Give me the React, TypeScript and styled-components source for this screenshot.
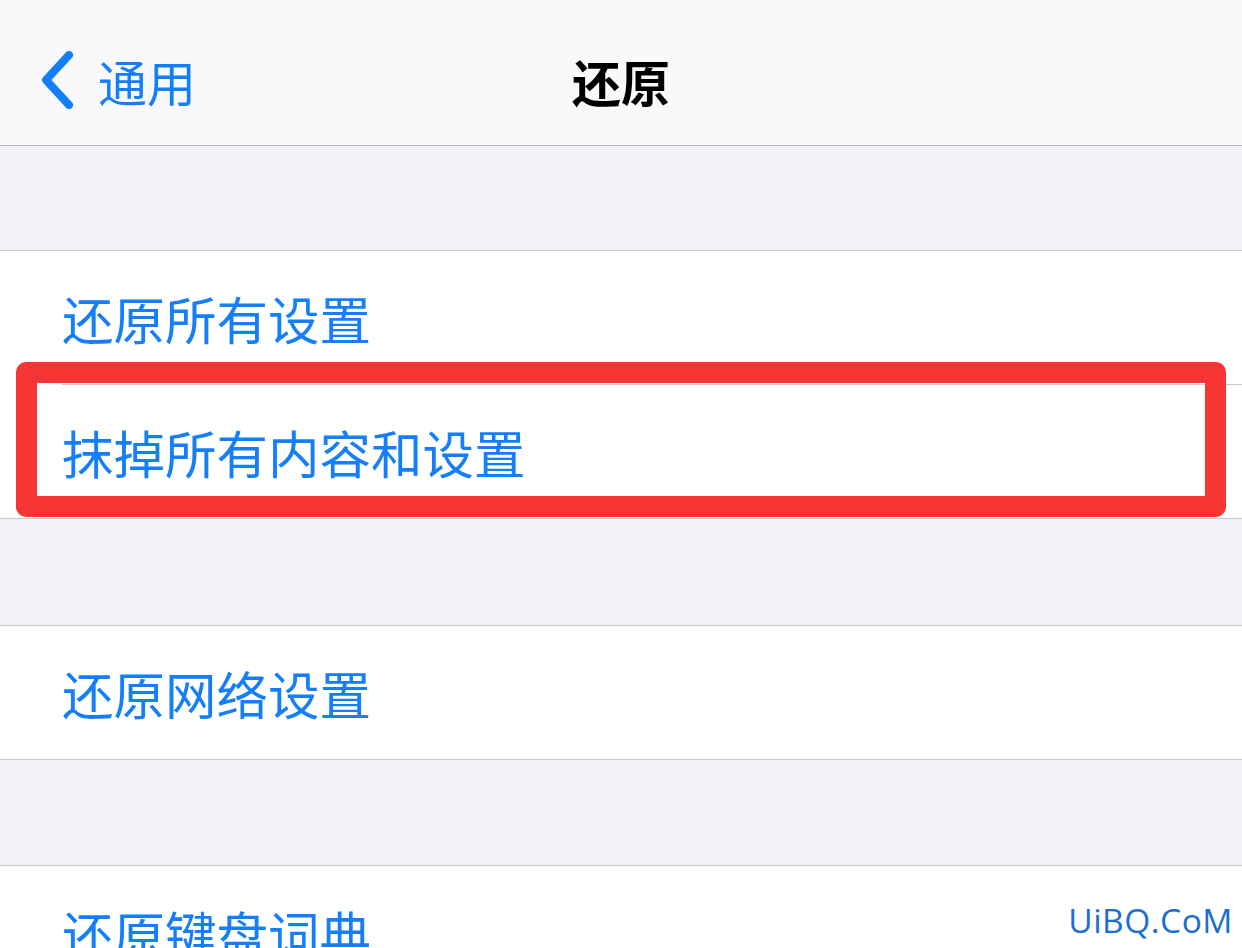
import React from "react";
import styled, { createGlobalStyle } from "styled-components";

const Global = createGlobalStyle`
  html, body { margin: 0; padding: 0; }
  body {
    width: 1242px;
    height: 948px;
    overflow: hidden;
    background: #f2f2f7;
    font-family: "Noto Sans CJK SC", "Noto Sans", sans-serif;
  }
`;

const Screen = styled.div`
  position: relative;
  width: 1242px;
  height: 948px;
  overflow: hidden;
  background: #f2f2f7;
`;

const NavBar = styled.header`
  box-sizing: border-box;
  height: 146px;
  padding-top: 15px;
  border-bottom: 1px solid #b4b4b8;
  background: #f9f9fb;
  display: grid;
  grid-template-columns: 1fr auto 1fr;
  align-items: center;
`;

const BackButton = styled.div`
  display: flex;
  align-items: center;
  gap: 24px;
  padding-left: 40px;
  color: #147efb;
  font-size: 49px;
  line-height: 1;
`;

const Title = styled.h1`
  margin: 0;
  font-size: 49px;
  font-weight: 700;
  line-height: 1;
  color: #000;
`;

const Spacer = styled.div<{ $h: number }>`
  height: ${(p) => p.$h}px;
  border-bottom: 1px solid #c8c7cc;
`;

const Group = styled.section`
  background: #fff;
  border-bottom: 1px solid #c8c7cc;
  display: flex;
  flex-direction: column;
`;

const Row = styled.div<{ $divider?: boolean }>`
  height: 133px;
  margin-left: 62px;
  display: flex;
  align-items: center;
  color: #147efb;
  font-size: 51.5px;
  line-height: 1;
  border-bottom: ${(p) => (p.$divider ? "1px solid #c8c7cc" : "none")};
`;

const Highlight = styled.div`
  position: absolute;
  left: 16px;
  top: 362px;
  width: 1210px;
  height: 155px;
  box-sizing: border-box;
  border: 21px solid #f73535;
  border-radius: 10px;
  pointer-events: none;
`;

const Watermark = styled.div`
  position: absolute;
  right: 9px;
  bottom: 5px;
  font-family: "Open Sans", "Noto Sans", sans-serif;
  font-size: 33.5px;
  color: #1c6fd1;
  letter-spacing: 0.5px;
`;

const Chevron = () => (
  <svg width="34" height="58" viewBox="0 0 34 58" fill="none">
    <path
      d="M29 4 L6 29 L29 54"
      stroke="#147efb"
      strokeWidth="8"
      strokeLinecap="round"
      strokeLinejoin="round"
    />
  </svg>
);

export default function App() {
  return (
    <>
      <Global />
      <Screen>
        <NavBar>
          <BackButton>
            <Chevron />
            <span>通用</span>
          </BackButton>
          <Title>还原</Title>
          <div />
        </NavBar>
        <Spacer $h={104} />
        <Group>
          <Row $divider>还原所有设置</Row>
          <Row>抹掉所有内容和设置</Row>
        </Group>
        <Spacer $h={106} />
        <Group>
          <Row>还原网络设置</Row>
        </Group>
        <Spacer $h={105} />
        <Group>
          <Row>还原键盘词典</Row>
        </Group>
        <Highlight />
        <Watermark>UiBQ.CoM</Watermark>
      </Screen>
    </>
  );
}
